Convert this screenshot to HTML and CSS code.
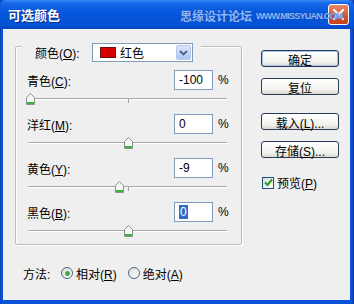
FILE: index.html
```html
<!DOCTYPE html>
<html lang="zh-CN">
<head>
    <meta charset="UTF-8">
    <title>可选颜色</title>
    <link rel="stylesheet" href="styles.css">
</head>
<body>
    <div class="window">
        <div class="titlebar">
            <span class="title">可选颜色</span>
            <span class="close"><svg width="13" height="13" viewBox="0 0 13 13"><path d="M2 2L11 11M11 2L2 11" stroke="#fff" stroke-width="2.2" stroke-linecap="round"/></svg></span>
            <span class="mark">思缘设计论坛<b>WWW.MISSYUAN.COM</b></span>
        </div>
        <div class="client">
            <div class="main">
                <div class="group">
                    <div class="group-head">
                        <span class="head-label">颜色(<u>O</u>):</span>
                        <div class="combo">
                            <span class="swatch"></span>
                            <span class="combo-text">红色</span>
                            <span class="drop"><svg width="9" height="6" viewBox="0 0 9 6"><path d="M1 1L4.5 4.5L8 1" fill="none" stroke="#4D6185" stroke-width="1.8"/></svg></span>
                        </div>
                    </div>
                    <div class="channels">
                        <div class="channel">
                            <div class="ch-row"><span class="ch-label">青色(<u>C</u>):</span><span class="ch-input">-100</span><span class="pct">%</span></div>
                            <div class="slider"><div class="track"><i class="tick"></i></div><svg class="thumb" style="left:-2px" width="9" height="12" viewBox="0 0 9 12"><path d="M0.5 4.5L4.5 0.5L8.5 4.5V11.5H0.5Z" fill="#F4F8F4" stroke="#8C948C"/><rect x="1" y="9" width="7" height="2" fill="#3FB13F"/></svg></div>
                        </div>
                        <div class="channel">
                            <div class="ch-row"><span class="ch-label">洋红(<u>M</u>):</span><span class="ch-input">0</span><span class="pct">%</span></div>
                            <div class="slider"><div class="track"><i class="tick"></i></div><svg class="thumb" style="left:96px" width="9" height="12" viewBox="0 0 9 12"><path d="M0.5 4.5L4.5 0.5L8.5 4.5V11.5H0.5Z" fill="#F4F8F4" stroke="#8C948C"/><rect x="1" y="9" width="7" height="2" fill="#3FB13F"/></svg></div>
                        </div>
                        <div class="channel">
                            <div class="ch-row"><span class="ch-label">黄色(<u>Y</u>):</span><span class="ch-input">-9</span><span class="pct">%</span></div>
                            <div class="slider"><div class="track"><i class="tick"></i></div><svg class="thumb" style="left:87px" width="9" height="12" viewBox="0 0 9 12"><path d="M0.5 4.5L4.5 0.5L8.5 4.5V11.5H0.5Z" fill="#F4F8F4" stroke="#8C948C"/><rect x="1" y="9" width="7" height="2" fill="#3FB13F"/></svg></div>
                        </div>
                        <div class="channel last">
                            <div class="ch-row"><span class="ch-label">黑色(<u>B</u>):</span><span class="ch-input"><span class="sel">0</span></span><span class="pct">%</span></div>
                            <div class="slider"><div class="track"><i class="tick"></i></div><svg class="thumb" style="left:96px" width="9" height="12" viewBox="0 0 9 12"><path d="M0.5 4.5L4.5 0.5L8.5 4.5V11.5H0.5Z" fill="#F4F8F4" stroke="#8C948C"/><rect x="1" y="9" width="7" height="2" fill="#3FB13F"/></svg></div>
                        </div>
                    </div>
                </div>
                <div class="method">
                    <span class="method-label">方法:</span>
                    <span class="radio on"></span><span class="radio-text">相对(<u>R</u>)</span>
                    <span class="radio"></span><span class="radio-text">绝对(<u>A</u>)</span>
                </div>
            </div>
            <div class="side">
                <button class="btn default">确定</button>
                <button class="btn">复位</button>
                <button class="btn gap">载入(<u>L</u>)...</button>
                <button class="btn">存储(<u>S</u>)...</button>
                <div class="check-row">
                    <span class="check"><svg width="9" height="9" viewBox="0 0 9 9"><path d="M1 4.5L3.5 7L8 1.5" fill="none" stroke="#21A121" stroke-width="2"/></svg></span>
                    <span>预览(<u>P</u>)</span>
                </div>
            </div>
        </div>
    </div>
</body>
</html>
```

FILE: styles.css
```css
*{
    margin:0;padding:0;box-sizing:border-box;
}
body{
    font-family:"Liberation Sans","Noto Sans CJK SC",sans-serif;
    font-size:12px;
    color:#000;
    background:#fff;
}
.window{
    width:354px;
    height:304px;
    display:flex;
    flex-direction:column;
    background:linear-gradient(90deg,#0A3FB8,#0A52D8 2px,#0A52D8 calc(100% - 2px),#08308F);
}
/* 标题栏 */
.titlebar{
    position:relative;
    height:29px;
    display:flex;
    align-items:center;
    padding:0 5px 0 8px;
    background:linear-gradient(#3A8CF6 0,#1667E8 3px,#0658DE 40%,#0452D6 85%,#0448C0 100%);
    border-radius:6px 6px 0 0;
}
.title{
    flex:1;
    color:#fff;
    font-weight:bold;
    font-size:13px;
    text-shadow:1px 1px 0 #0A2A88;
}
.close{
    width:21px;
    height:21px;
    display:flex;
    align-items:center;
    justify-content:center;
    border:1px solid #fff;
    border-radius:3px;
    background:linear-gradient(#E88A6B,#D4532F 60%,#C33F20);
}
.mark{
    position:absolute;
    left:180px;
    top:7px;
    display:flex;
    align-items:center;
    color:#8DB8F4;
    font-size:12px;
    font-weight:bold;
    text-shadow:0 0 1px #1A3D9A;
    white-space:nowrap;
}
.mark b{
    font-family:"Liberation Sans",sans-serif;
    font-size:9px;
    letter-spacing:-0.75px;
    margin-left:4px;
}
/* 客户区 */
.client{
    flex:1;
    margin:0 4px 4px 3px;
    background:#EFEFEF;
    display:flex;
    padding:17px 0 0 12px;
}
.main{
    width:227px;
}
.group{
    height:199px;
    border:1px solid #BDBDBD;
    border-radius:2px;
    box-shadow:inset 1px 1px 0 #fff,1px 1px 0 #fff;
    padding:0 13px 0 11px;
}
.group-head{
    display:flex;
    align-items:center;
    width:max-content;
    height:19px;
    margin:-4px 0 0 -5px;
    padding:0 8px 0 13px;
    background:#EFEFEF;
}
.head-label{
    width:57px;
}
.combo{
    width:101px;
    height:19px;
    display:flex;
    align-items:center;
    border:1px solid #7F9DB9;
    background:#fff;
}
.swatch{
    width:16px;
    height:11px;
    margin-left:7px;
    background:#D50000;
    border:1px solid #6A1010;
}
.combo-text{
    margin-left:4px;
}
.drop{
    margin-left:auto;
    margin-right:1px;
    width:15px;
    height:15px;
    display:flex;
    align-items:center;
    justify-content:center;
    border-radius:2px;
    background:linear-gradient(#DCE6FB,#C0D2F7 60%,#B0C6F2);
    border:1px solid #B7C8EE;
}
.channels{
    margin-top:8px;
}
.channel{
    height:44px;
}
.ch-row{
    display:flex;
    align-items:center;
    height:20px;
}
.ch-label{
    flex:1;
}
.ch-input{
    width:39px;
    height:20px;
    display:flex;
    align-items:center;
    padding-left:4px;
    border:1px solid #7F9DB9;
    background:#fff;
}
.sel{
    background:#316AC5;
    color:#fff;
    padding:0 1px;
}
.pct{
    width:15px;
    padding-left:5px;
}
.slider{
    position:relative;
    height:24px;
    margin:0 1px;
}
.track{
    position:relative;
    top:8px;
    height:2px;
    border-top:1px solid #A8A8A8;
    border-bottom:1px solid #fff;
    border-radius:1px;
}
.tick{
    position:absolute;
    left:100px;
    top:0;
    width:1px;
    height:4px;
    background:#A0A0A0;
}
.thumb{
    position:absolute;
    top:3px;
}
/* 方法 */
.method{
    display:flex;
    align-items:center;
    height:18px;
    margin-top:19px;
    padding-left:8px;
}
.method-label{
    width:38px;
}
.radio{
    width:12px;
    height:12px;
    border-radius:50%;
    border:1px solid #4A6484;
    background:linear-gradient(135deg,#DCDCD6,#fff);
    display:flex;
    align-items:center;
    justify-content:center;
}
.radio.on::after{
    content:"";
    width:5px;
    height:5px;
    border-radius:50%;
    background:#3FAE3F;
}
.radio-text{
    margin:0 11px 0 3px;
}
/* 右侧按钮 */
.side{
    width:78px;
    margin-left:19px;
    padding-top:4px;
    display:flex;
    flex-direction:column;
}
.btn{
    height:17px;
    margin-bottom:11px;
    font:inherit;
    border:1px solid #2A3B5A;
    border-radius:3px;
    background:linear-gradient(#FFFFFF,#F2F2EE 70%,#DCD9D0);
}
.btn.default{
    box-shadow:inset 0 0 0 1px #A9C3EE;
}
.btn.gap{
    margin-top:7px;
}
.check-row{
    display:flex;
    align-items:center;
    margin-top:5px;
    margin-left:1px;
}
.check{
    width:12px;
    height:12px;
    margin-right:3px;
    display:flex;
    align-items:center;
    justify-content:center;
    border:1px solid #1C5180;
    background:linear-gradient(135deg,#DCDCD6,#fff);
}
```
